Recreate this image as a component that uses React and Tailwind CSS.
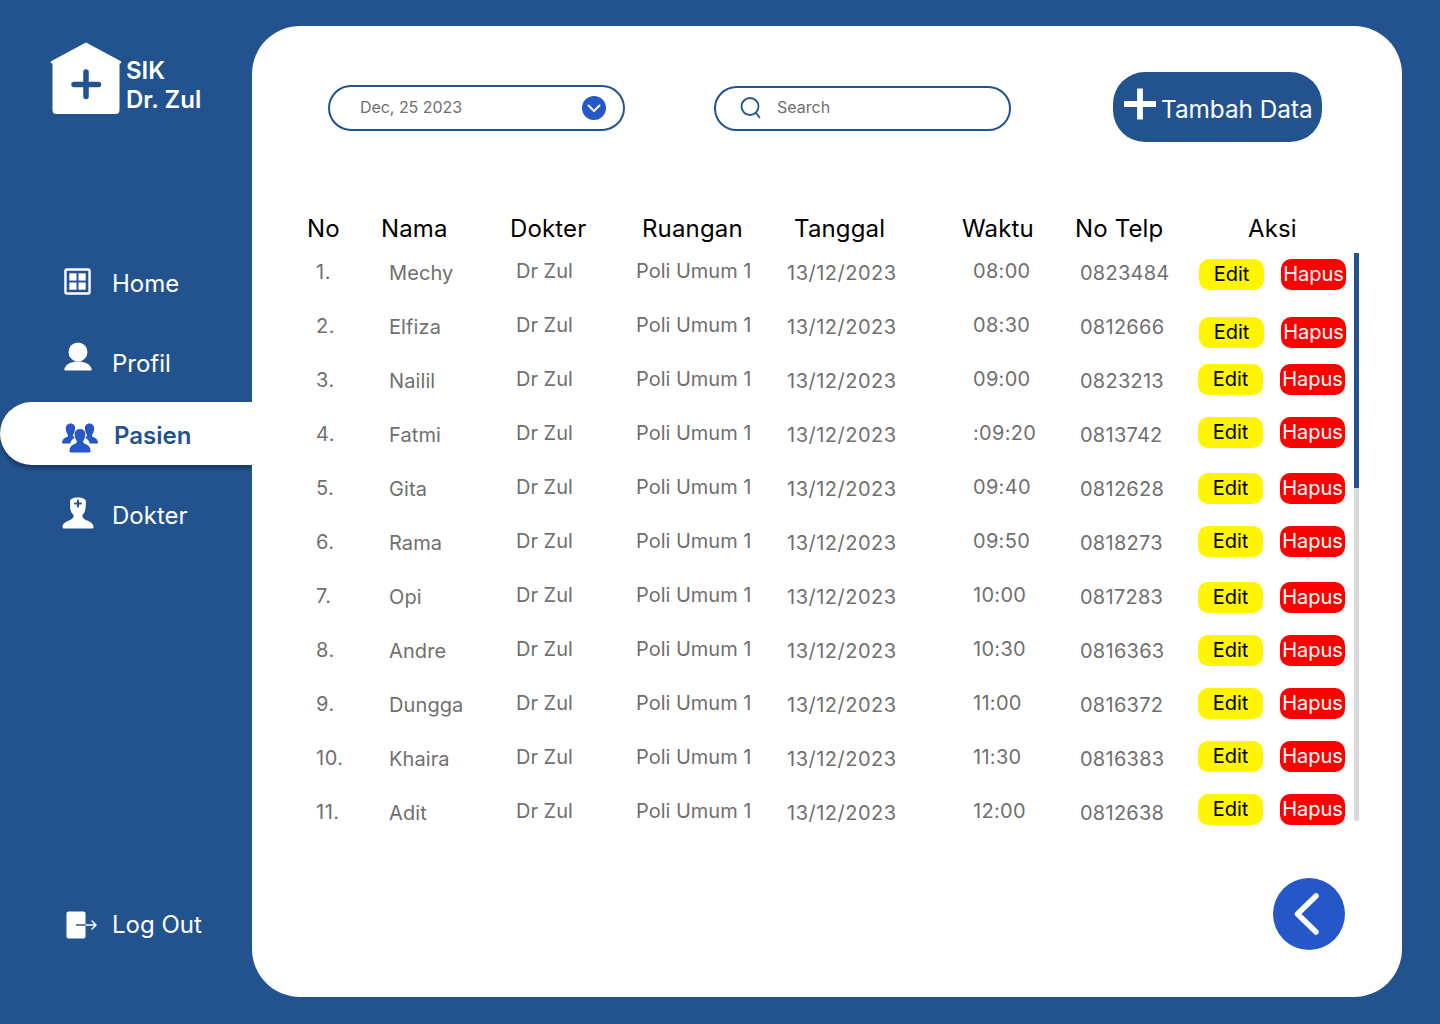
import React from "react";

const patients = [
  { no: "1.", nama: "Mechy", waktu: "08:00", telp: "0823484", aksi: "mt-[6px] ml-[1px]" },
  { no: "2.", nama: "Elfiza", waktu: "08:30", telp: "0812666", aksi: "mt-[10px] ml-[1px]" },
  { no: "3.", nama: "Nailil", waktu: "09:00", telp: "0823213", aksi: "mt-[3px]" },
  { no: "4.", nama: "Fatmi", waktu: ":09:20", telp: "0813742", aksi: "mt-[2px]" },
  { no: "5.", nama: "Gita", waktu: "09:40", telp: "0812628", aksi: "mt-[4px]" },
  { no: "6.", nama: "Rama", waktu: "09:50", telp: "0818273", aksi: "mt-[3px]" },
  { no: "7.", nama: "Opi", waktu: "10:00", telp: "0817283", aksi: "mt-[5px]" },
  { no: "8.", nama: "Andre", waktu: "10:30", telp: "0816363", aksi: "mt-[4px]" },
  { no: "9.", nama: "Dungga", waktu: "11:00", telp: "0816372", aksi: "mt-[3px]" },
  { no: "10.", nama: "Khaira", waktu: "11:30", telp: "0816383", aksi: "mt-[2px]" },
  { no: "11.", nama: "Adit", waktu: "12:00", telp: "0812638", aksi: "mt-[1px]" },
];

function LogoIcon() {
  return (
    <svg width="72" height="72" viewBox="0 0 72 72">
      <path
        d="M36 0.5 L70.5 19 Q72.5 21 70 21.5 L69.5 21.5 L69.5 68 Q69.5 72 65.5 72 L6.5 72 Q2.5 72 2.5 68 L2.5 21.5 L2 21.5 Q-0.5 21 1.5 19 Z"
        fill="#fff"
      />
      <path d="M36 30 V54.5 M24 42.5 H48.5" stroke="#23538F" strokeWidth="5.5" strokeLinecap="round" />
    </svg>
  );
}

function HomeIcon() {
  return (
    <svg width="27" height="27" viewBox="0 0 28 28" fill="none">
      <rect x="1.5" y="1.5" width="25" height="25" rx="1.5" stroke="#fff" strokeWidth="2.5" />
      <rect x="5.5" y="5.5" width="7.5" height="7.5" fill="#fff" />
      <rect x="15" y="5.5" width="7.5" height="7.5" fill="#fff" />
      <rect x="5.5" y="15" width="7.5" height="7.5" fill="#fff" />
      <rect x="15" y="15" width="7.5" height="7.5" fill="#fff" />
    </svg>
  );
}

function ProfilIcon() {
  return (
    <svg width="28" height="29" viewBox="0 0 28 29" fill="#fff">
      <circle cx="14" cy="10" r="9.5" />
      <path d="M1 28.5 Q0 28.5 0.5 26.5 C2 22 8 19.5 14 19.5 C20 19.5 26 22 27.5 26.5 Q28 28.5 27 28.5 Z" />
    </svg>
  );
}

function PasienIcon() {
  return (
    <svg width="36" height="30" viewBox="0 0 36 30" fill="#2557C8">
      <path d="M8.5 0.5 C12 0.5 13.5 3 13 6.5 C12.7 9 11.5 11 11 12 C10.8 13.5 12 14 13 14.6 C11 16 8.8 17.5 8.2 20.5 L0 20.5 C0 17 1.5 15.5 4 14.5 C5.5 14 6.3 13.3 6 12 C5 10.5 4 8.5 3.8 6 C3.6 3 5.3 0.5 8.5 0.5 Z" />
      <path d="M27.5 0.5 C24 0.5 22.5 3 23 6.5 C23.3 9 24.5 11 25 12 C25.2 13.5 24 14 23 14.6 C25 16 27.2 17.5 27.8 20.5 L36 20.5 C36 17 34.5 15.5 32 14.5 C30.5 14 29.7 13.3 30 12 C31 10.5 32 8.5 32.2 6 C32.4 3 30.7 0.5 27.5 0.5 Z" />
      <path d="M18 6 C22 6 23.8 9 23.3 12.5 C23 15 21.8 17 21.2 18.2 C21 19.8 22 20.5 24 21.3 C26.8 22.3 28.5 24.5 28.5 28.2 Q28.5 29.5 27 29.5 L9 29.5 Q7.5 29.5 7.5 28.2 C7.5 24.5 9.2 22.3 12 21.3 C14 20.5 15 19.8 14.8 18.2 C14.2 17 13 15 12.7 12.5 C12.2 9 14 6 18 6 Z" />
    </svg>
  );
}

function DokterIcon() {
  return (
    <svg width="32" height="32" viewBox="0 0 32 32">
      <path
        d="M15.5 0.5 C21 0.5 24 2 24 5 L23.5 12 C23 15 21.5 17 20.5 18 C20 20.5 21.5 22 25 23.5 C29 25 31.5 27 31.5 30 Q31.5 31.5 30 31.5 L2 31.5 Q0.5 31.5 0.5 30 C0.5 27 3 25 7 23.5 C10.5 22 12 20.5 11.5 18 C10 16.5 8.5 14 8.2 11.5 L8 5 C8 2 10.5 0.5 15.5 0.5 Z"
        fill="#fff"
      />
      <path d="M16 3.5 V9.5 M13 6.5 H19" stroke="#23538F" strokeWidth="2" strokeLinecap="round" />
    </svg>
  );
}

function LogoutIcon() {
  return (
    <svg width="32" height="28" viewBox="0 0 32 28" fill="none">
      <rect x="0.5" y="0.5" width="19" height="27" rx="2" fill="#fff" />
      <path d="M10 14 H20" stroke="#23538F" strokeWidth="1.5" />
      <path d="M20 14 H30 M26 10 L30 14 L26 18" stroke="#fff" strokeWidth="1.5" strokeLinecap="round" strokeLinejoin="round" />
    </svg>
  );
}

function NavItem({ icon, label, iconClass }) {
  return (
    <div className="flex h-[63px] items-center pl-[62px] text-[24px] text-white">
      <div className={iconClass}>{icon}</div>
      <span>{label}</span>
    </div>
  );
}

export default function App() {
  return (
    <div className="flex h-[1024px] w-[1440px] overflow-hidden bg-[#23538F] font-['Inter',sans-serif]">
      {/* sidebar */}
      <aside className="flex w-[252px] shrink-0 flex-col">
        <div className="ml-[50px] mt-[42px] flex items-start">
          <LogoIcon />
          <div className="ml-[4px] mt-[14px] text-[24px] font-semibold leading-[29px] text-white">
            <p>SIK</p>
            <p>Dr. Zul</p>
          </div>
        </div>
        <nav className="mt-[138px] flex flex-col">
          <NavItem icon={<HomeIcon />} label="Home" iconClass="ml-[2px] mr-[21px] mb-[4px] w-[27px]" />
          <div className="mt-[17px]">
            <NavItem icon={<ProfilIcon />} label="Profil" iconClass="ml-[2px] mr-[20px] mb-[14px] w-[28px]" />
          </div>
          <div className="mt-[7px] flex h-[63px] items-center rounded-l-[32px] bg-white pl-[62px] text-[24px] font-semibold text-[#23538F] shadow-[0_3px_5px_rgba(0,0,0,0.35)]">
            <div className="mr-[16px] mt-[8px] w-[36px]">
              <PasienIcon />
            </div>
            <span className="pt-[5px]">Pasien</span>
          </div>
          <div className="mt-[19px]">
            <NavItem icon={<DokterIcon />} label="Dokter" iconClass="mr-[18px] mb-[6px] w-[32px]" />
          </div>
        </nav>
        <div className="mt-auto mb-[81px] flex items-center pl-[66px] text-[24px] text-white">
          <div className="mr-[14px] w-[32px]">
            <LogoutIcon />
          </div>
          <span>Log Out</span>
        </div>
      </aside>

      {/* main panel */}
      <main className="mt-[26px] h-[971px] w-[1150px] rounded-[48px] bg-white">
        <div className="flex items-start pl-[76px] pt-[46px]">
          <div className="mt-[13px] flex h-[46px] w-[297px] items-center justify-between rounded-[23px] border-2 border-[#23538F] pl-[30px] pr-[17px] text-[16px] text-[#6f6f6f]">
            <span className="pb-[2px] tracking-[-0.05px]">Dec, 25 2023</span>
            <svg width="24" height="24" viewBox="0 0 24 24" fill="none">
              <circle cx="12" cy="12" r="12" fill="#2557C8" />
              <path d="M6.5 9.5 L12 15 L17.5 9.5" stroke="#fff" strokeWidth="2" strokeLinecap="round" strokeLinejoin="round" />
            </svg>
          </div>
          <div className="ml-[89px] mt-[14px] flex h-[45px] w-[297px] items-center rounded-[23px] border-2 border-[#23538F] pl-[23px] text-[16px] text-[#6f6f6f]">
            <svg width="24" height="24" viewBox="0 0 24 24" fill="none" stroke="#23538F" strokeWidth="1.8" strokeLinecap="round" className="mb-[2px]">
              <circle cx="11" cy="10.5" r="8.5" />
              <path d="M17 17 L20.5 21.5" />
            </svg>
            <span className="ml-[14px] pb-[4px]">Search</span>
          </div>
          <button className="ml-[102px] flex h-[70px] w-[209px] items-center rounded-[32px] bg-[#23538F] pl-[11px] text-[24.3px] text-white">
            <svg width="32" height="32" viewBox="0 0 33 32" fill="#fff" className="mb-[6px]">
              <path d="M13.5 0 H19.5 V13 H33 V19 H19.5 V32 H13.5 V19 H0 V13 H13.5 Z" />
            </svg>
            <span className="ml-[5px] whitespace-nowrap pt-[4px]">Tambah Data</span>
          </button>
        </div>

        {/* table */}
        <div className="ml-[55px] mt-[72px] grid h-[39px] grid-cols-[74px_129px_132px_152px_168px_113px_173px_auto] text-[24px] leading-[29px] tracking-[0.15px] text-black">
          <span>No</span>
          <span>Nama</span>
          <span>Dokter</span>
          <span>Ruangan</span>
          <span>Tanggal</span>
          <span>Waktu</span>
          <span>No Telp</span>
          <span>Aksi</span>
        </div>
        <div className="flex items-start">
          <div className="ml-[64px] w-[1038px]">
            {patients.map((p) => (
              <div
                key={p.no}
                className="grid h-[54px] grid-cols-[73px_127px_120px_151px_186px_107px_118px_auto] text-[20px] leading-[24px] text-[#6f6f6f]"
              >
                <span className="pt-[7px] tracking-[0.5px]">{p.no}</span>
                <span className="pt-[8px] tracking-[0.1px]">{p.nama}</span>
                <span className="pt-[6px]">Dr Zul</span>
                <span className="pt-[6px]">Poli Umum 1</span>
                <span className="pt-[8px] tracking-[0.5px]">13/12/2023</span>
                <span className="pt-[6px] tracking-[0.3px]">{p.waktu}</span>
                <span className="pt-[8px] tracking-[0.25px]">{p.telp}</span>
                <div className={`flex gap-[17px] ${p.aksi}`}>
                  <span className="flex h-[31px] w-[65px] items-center justify-center rounded-[10px] bg-[#FFF500] pb-[1px] text-black">Edit</span>
                  <span className="flex h-[31px] w-[65px] items-center justify-center rounded-[10px] bg-[#FF0000] pb-[1px] text-white">Hapus</span>
                </div>
              </div>
            ))}
          </div>
          <div className="h-[568px] w-[5px] bg-[#D9D9D9]">
            <div className="h-[235px] bg-[#23538F]" />
          </div>
        </div>
        <div className="flex justify-end pr-[57px] pt-[31px]">
          <div className="flex h-[72px] w-[72px] items-center justify-center rounded-full bg-[#2557C8]">
            <svg width="28" height="44" viewBox="0 0 28 44" fill="none" className="mr-[3px]">
              <path d="M22 4 L3.5 22 L22 40" stroke="#fff" strokeWidth="5.5" strokeLinecap="round" strokeLinejoin="round" />
            </svg>
          </div>
        </div>
      </main>
    </div>
  );
}
